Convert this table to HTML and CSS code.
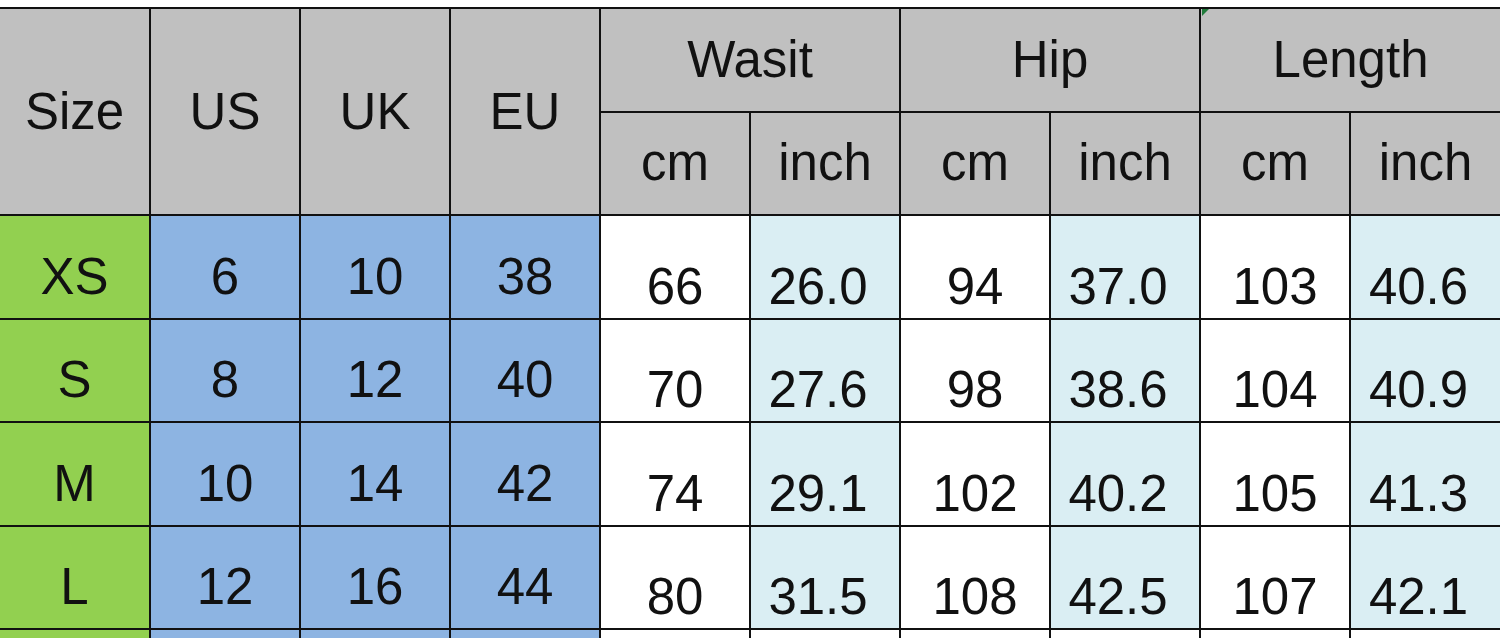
FILE: index.html
```html
<!DOCTYPE html>
<html>
<head>
<meta charset="utf-8">
<link rel="stylesheet" href="styles.css">
</head>
<body>
<div class="sheet">
<table class="chart">
  <colgroup>
    <col class="c"><col class="c"><col class="c"><col class="c"><col class="c"><col class="c"><col class="c"><col class="c"><col class="c"><col class="c">
  </colgroup>
  <thead>
    <tr class="hrow">
      <th rowspan="2" class="hd first">Size</th>
      <th rowspan="2" class="hd">US</th>
      <th rowspan="2" class="hd">UK</th>
      <th rowspan="2" class="hd">EU</th>
      <th colspan="2" class="hd">Wasit</th>
      <th colspan="2" class="hd">Hip</th>
      <th colspan="2" class="hd mark">Length<span class="tri"></span></th>
    </tr>
    <tr class="hrow">
      <th class="hd">cm</th><th class="hd">inch</th>
      <th class="hd">cm</th><th class="hd">inch</th>
      <th class="hd">cm</th><th class="hd">inch</th>
    </tr>
  </thead>
  <tbody>
    <tr class="drow">
      <td class="sz first">XS</td><td class="intl">6</td><td class="intl">10</td><td class="intl">38</td>
      <td class="cm">66</td><td class="in">26.0</td><td class="cm">94</td><td class="in">37.0</td><td class="cm">103</td><td class="in">40.6</td>
    </tr>
    <tr class="drow">
      <td class="sz first">S</td><td class="intl">8</td><td class="intl">12</td><td class="intl">40</td>
      <td class="cm">70</td><td class="in">27.6</td><td class="cm">98</td><td class="in">38.6</td><td class="cm">104</td><td class="in">40.9</td>
    </tr>
    <tr class="drow">
      <td class="sz first">M</td><td class="intl">10</td><td class="intl">14</td><td class="intl">42</td>
      <td class="cm">74</td><td class="in">29.1</td><td class="cm">102</td><td class="in">40.2</td><td class="cm">105</td><td class="in">41.3</td>
    </tr>
    <tr class="drow">
      <td class="sz first">L</td><td class="intl">12</td><td class="intl">16</td><td class="intl">44</td>
      <td class="cm">80</td><td class="in">31.5</td><td class="cm">108</td><td class="in">42.5</td><td class="cm">107</td><td class="in">42.1</td>
    </tr>
    <tr class="drow">
      <td class="sz first"></td><td class="intl"></td><td class="intl"></td><td class="intl"></td>
      <td class="blank"></td><td class="blank"></td><td class="blank"></td><td class="blank"></td><td class="blank"></td><td class="blank"></td>
    </tr>
  </tbody>
</table>
</div>
</body>
</html>
```

FILE: styles.css
```css
html, body {
  margin: 0;
  padding: 0;
  background: #ffffff;
  overflow: hidden;
}
.sheet {
  width: 1500px;
  height: 638px;
  overflow: hidden;
  padding-top: 7px;
  box-sizing: border-box;
}
.chart {
  border-collapse: collapse;
  table-layout: fixed;
  width: 1500px;
  font-family: "Liberation Sans", Arial, sans-serif;
  font-size: 51px;
  color: #111111;
}
.c {
  width: 150px;
}
.chart th,
.chart td {
  border: 2px solid #111111;
  padding: 0;
  text-align: center;
  line-height: 58px;
  font-weight: normal;
  overflow: hidden;
  white-space: nowrap;
}
.chart .first {
  border-left: none;
}
.chart tr > :last-child {
  border-right: none;
}
.hrow {
  height: 103.5px;
}
.drow {
  height: 103.5px;
}
.hd {
  background: #c0c0c0;
  vertical-align: middle;
}
.mark {
  position: relative;
}
.tri {
  position: absolute;
  left: 1px;
  top: 0;
  width: 0;
  height: 0;
  border-top: 7px solid #1f7a3a;
  border-right: 7px solid transparent;
}
.chart td {
  vertical-align: bottom;
}
.sz {
  background: #92d050;
  padding-bottom: 12px !important;
}
.intl {
  background: #8db4e2;
  padding-bottom: 12px !important;
}
.cm {
  background: #ffffff;
  padding-bottom: 2px !important;
}
.in {
  background: #daeef3;
  padding-bottom: 2px !important;
  padding-right: 14px !important;
}
.blank {
  background: #ffffff;
}
```
